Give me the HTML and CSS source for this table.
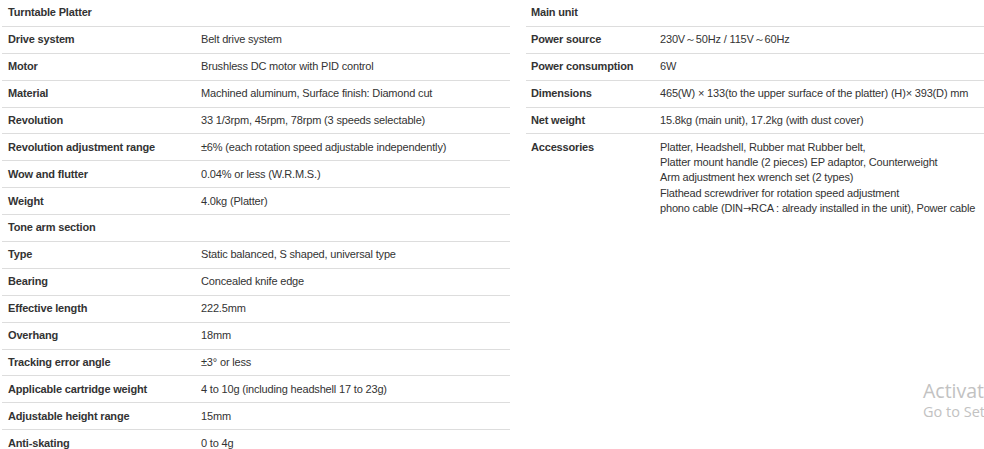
FILE: index.html
```html
<!DOCTYPE html>
<html lang="en">
<head>
<meta charset="utf-8">
<title>Specifications</title>
<link rel="stylesheet" href="styles.css">
</head>
<body>
<div class="specs">
  <table class="spec-table spec-left">
    <colgroup><col class="col-label"><col class="col-value"></colgroup>
    <tbody>
      <tr class="section"><th colspan="2">Turntable Platter</th></tr>
      <tr><th>Drive system</th><td>Belt drive system</td></tr>
      <tr><th>Motor</th><td>Brushless DC motor with PID control</td></tr>
      <tr><th>Material</th><td>Machined aluminum, Surface finish: Diamond cut</td></tr>
      <tr><th>Revolution</th><td>33 1/3rpm, 45rpm, 78rpm (3 speeds selectable)</td></tr>
      <tr><th>Revolution adjustment range</th><td>±6% (each rotation speed adjustable independently)</td></tr>
      <tr><th>Wow and flutter</th><td>0.04% or less (W.R.M.S.)</td></tr>
      <tr><th>Weight</th><td>4.0kg (Platter)</td></tr>
      <tr class="section"><th colspan="2">Tone arm section</th></tr>
      <tr><th>Type</th><td>Static balanced, S shaped, universal type</td></tr>
      <tr><th>Bearing</th><td>Concealed knife edge</td></tr>
      <tr><th>Effective length</th><td>222.5mm</td></tr>
      <tr><th>Overhang</th><td>18mm</td></tr>
      <tr><th>Tracking error angle</th><td>±3° or less</td></tr>
      <tr><th>Applicable cartridge weight</th><td>4 to 10g (including headshell 17 to 23g)</td></tr>
      <tr><th>Adjustable height range</th><td>15mm</td></tr>
      <tr><th>Anti-skating</th><td>0 to 4g</td></tr>
    </tbody>
  </table>
  <table class="spec-table spec-right">
    <colgroup><col class="col-label"><col class="col-value"></colgroup>
    <tbody>
      <tr class="section"><th colspan="2">Main unit</th></tr>
      <tr><th>Power source</th><td>230V～50Hz / 115V～60Hz</td></tr>
      <tr><th>Power consumption</th><td>6W</td></tr>
      <tr><th>Dimensions</th><td>465(W) × 133(to the upper surface of the platter) (H)× 393(D) mm</td></tr>
      <tr><th>Net weight</th><td>15.8kg (main unit), 17.2kg (with dust cover)</td></tr>
      <tr class="multi"><th>Accessories</th><td>Platter, Headshell, Rubber mat Rubber belt,<br>Platter mount handle (2 pieces) EP adaptor, Counterweight<br>Arm adjustment hex wrench set (2 types)<br>Flathead screwdriver for rotation speed adjustment<br>phono cable (DIN<span class="arrow">→</span>RCA : already installed in the unit), Power cable</td></tr>
    </tbody>
  </table>
</div>
<div class="watermark">
  <div class="wm-title">Activate Windows</div>
  <div class="wm-sub">Go to Settings to activate Windows.</div>
</div>
</body>
</html>
```
FILE: styles.css
```css
html, body {
  margin: 0;
  padding: 0;
  background: #ffffff;
  overflow: hidden;
}

body {
  width: 984px;
  height: 449px;
  position: relative;
  font-family: "Liberation Sans", Arial, sans-serif;
  font-size: 11px;
  color: #333333;
}

.specs {
  display: flex;
  gap: 16px;
  padding-left: 2px;
  align-items: flex-start;
}

.spec-table {
  flex: 0 0 508px;
  width: 508px;
  border-collapse: collapse;
  table-layout: fixed;
}

.spec-left .col-label { width: 193px; }
.spec-right .col-label { width: 128px; }

.spec-table th,
.spec-table td {
  padding: 5.3px 6px;
  line-height: 15.3px;
  text-align: left;
  vertical-align: top;
  white-space: nowrap;
  letter-spacing: -0.17px;
  border-bottom: 1px solid #dddddd;
}

.spec-table th {
  font-weight: bold;
}

.spec-table td {
  font-weight: normal;
}

.spec-right th {
  padding-left: 5px;
}

.spec-right tr.multi th,
.spec-right tr.multi td {
  border-bottom: none;
}

.arrow {
  font-family: "DejaVu Sans", sans-serif;
  font-size: 10px;
}

.watermark {
  position: absolute;
  left: 923px;
  top: 378px;
  white-space: nowrap;
  color: #c2c2c2;
  font-family: "Open Sans", "Noto Sans", sans-serif;
}

.wm-title {
  font-size: 19.5px;
  line-height: 25px;
}

.wm-sub {
  font-size: 14.5px;
  line-height: 18px;
}
```
